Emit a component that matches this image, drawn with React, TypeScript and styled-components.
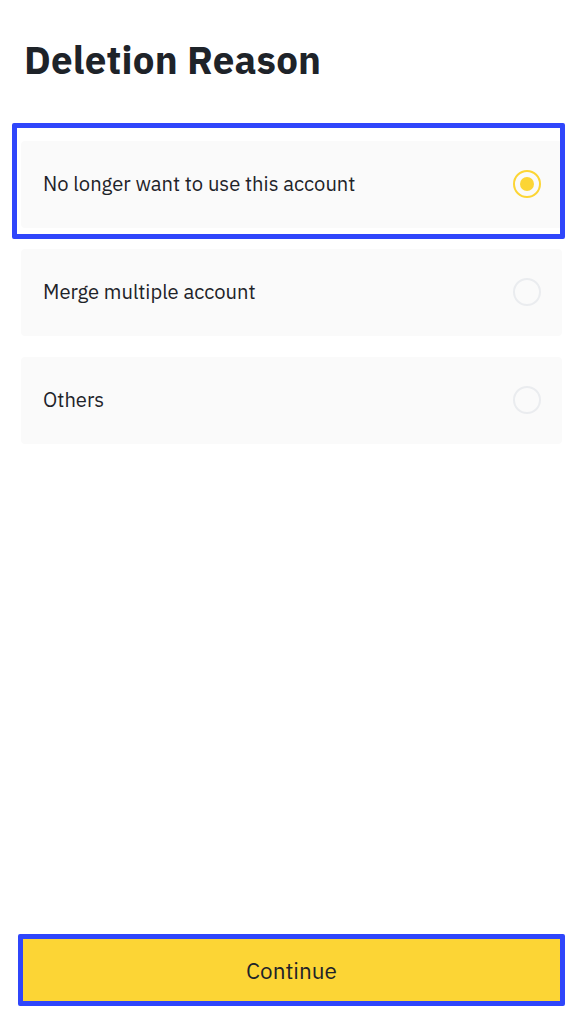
import { useState } from 'react';
import styled, { createGlobalStyle } from 'styled-components';

const GlobalStyle = createGlobalStyle`
  html, body {
    margin: 0;
    padding: 0;
    background: #ffffff;
  }
  body {
    font-family: 'IBM Plex Sans', 'Noto Sans', 'Liberation Sans', sans-serif;
    color: #1e2329;
  }
`;

const Page = styled.div`
  min-height: 1024px;
  box-sizing: border-box;
  display: flex;
  flex-direction: column;
  padding: 0 20px 0 21px;
`;

const Title = styled.h1`
  margin: 34px 0 0 3px;
  font-size: 38.5px;
  line-height: 52px;
  font-weight: 700;
  letter-spacing: 0.2px;
  color: #1e2329;
`;

const List = styled.div`
  margin-top: 55px;
  display: flex;
  flex-direction: column;
  gap: 21px;
`;

const Highlight = styled.div<{ $t: number; $r: number; $b: number; $l: number }>`
  position: relative;
  &::after {
    content: '';
    position: absolute;
    top: ${(p) => p.$t}px;
    right: ${(p) => p.$r}px;
    bottom: ${(p) => p.$b}px;
    left: ${(p) => p.$l}px;
    border: 5px solid #2f46fb;
    border-radius: 2px;
    pointer-events: none;
  }
`;

const Card = styled.button`
  all: unset;
  box-sizing: border-box;
  width: 100%;
  height: 87px;
  display: flex;
  align-items: center;
  justify-content: space-between;
  padding: 0 21px 2px 22px;
  background: #fafafa;
  border-radius: 4px;
  cursor: pointer;
`;

const Label = styled.span`
  font-size: 20.2px;
  font-weight: 400;
  color: #1e2329;
`;

const Radio = styled.span<{ $on: boolean }>`
  box-sizing: border-box;
  width: 28px;
  height: 28px;
  border-radius: 50%;
  border: 2px solid ${(p) => (p.$on ? '#fcd535' : '#eaecef')};
  display: flex;
  align-items: center;
  justify-content: center;
  &::after {
    content: '';
    width: 14px;
    height: 14px;
    border-radius: 50%;
    background: ${(p) => (p.$on ? '#fcd535' : 'transparent')};
  }
`;

const Spacer = styled.div`
  flex: 1;
`;

const Footer = styled.div`
  padding-bottom: 20px;
`;

const ContinueButton = styled.button`
  all: unset;
  box-sizing: border-box;
  width: 100%;
  height: 68px;
  display: flex;
  align-items: center;
  justify-content: center;
  background: #fcd535;
  border-radius: 4px;
  font-size: 22.5px;
  font-weight: 400;
  color: #1e2329;
  cursor: pointer;
`;

const reasons = ['No longer want to use this account', 'Merge multiple account', 'Others'];

export default function App() {
  const [selected, setSelected] = useState(0);

  return (
    <>
      <GlobalStyle />
      <Page>
        <Title>Deletion Reason</Title>
        <List>
          {reasons.map((r, i) => {
            const card = (
              <Card key={r} onClick={() => setSelected(i)}>
                <Label>{r}</Label>
                <Radio $on={selected === i} />
              </Card>
            );
            return i === 0 ? (
              <Highlight key={r} $t={-18} $r={-3} $b={-11} $l={-9}>
                {card}
              </Highlight>
            ) : (
              card
            );
          })}
        </List>
        <Spacer />
        <Footer>
          <Highlight $t={-2} $r={-3} $b={-2} $l={-3}>
            <ContinueButton>Continue</ContinueButton>
          </Highlight>
        </Footer>
      </Page>
    </>
  );
}
